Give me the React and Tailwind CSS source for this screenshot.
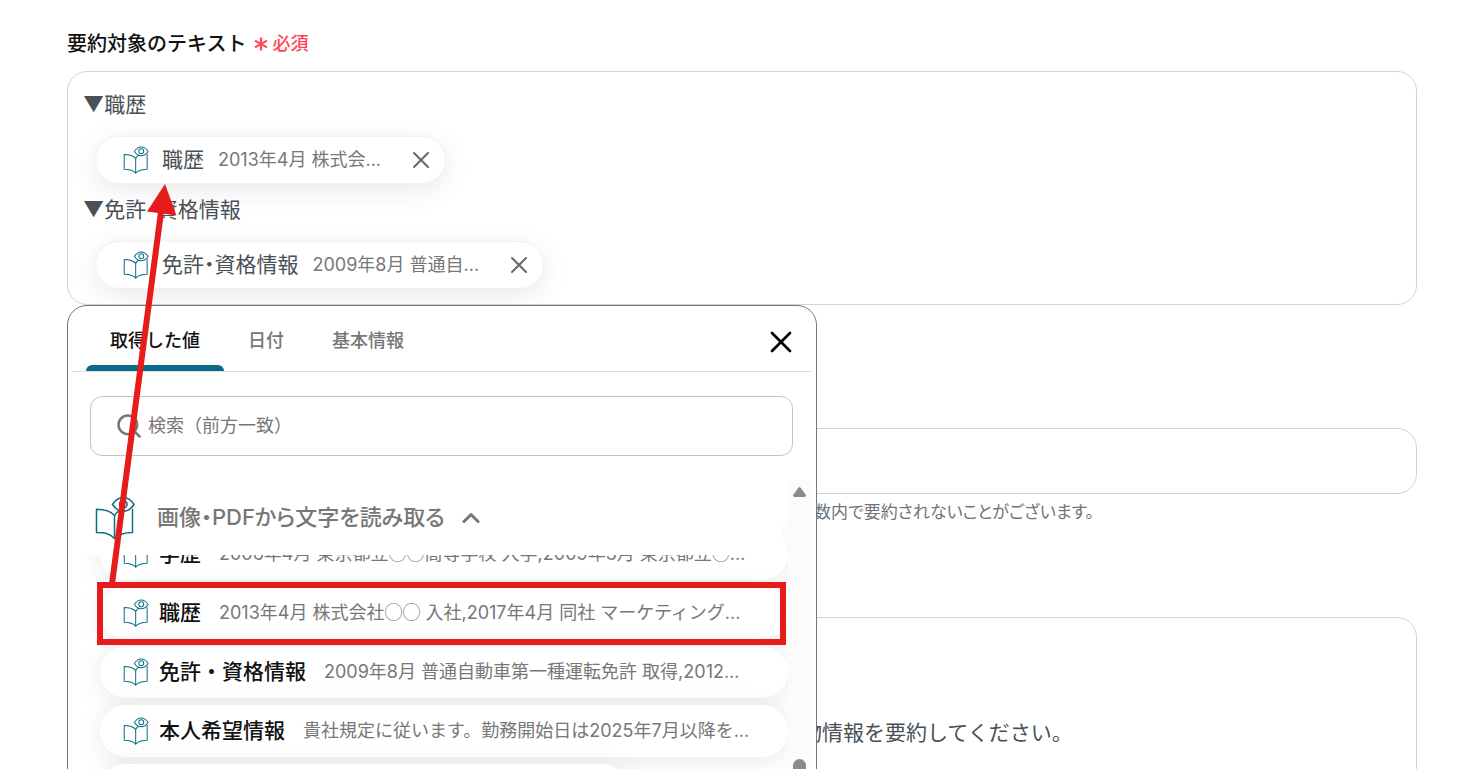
import React, { useState } from 'react';
import { ChevronUp, Search, X } from 'lucide-react';

const TABS = ['取得した値', '日付', '基本情報'];

const CHIPS = [
  { label: '職歴', value: '2013年4月 株式会...' },
  { label: '免許・資格情報', value: '2009年8月 普通自...' },
];

const ROWS = [
  { label: '学歴', value: '2006年4月 東京都立◯◯高等学校 入学,2009年3月 東京都立◯...' },
  { label: '職歴', value: '2013年4月 株式会社◯◯ 入社,2017年4月 同社 マーケティング...' },
  { label: '免許・資格情報', value: '2009年8月 普通自動車第一種運転免許 取得,2012...' },
  { label: '本人希望情報', value: '貴社規定に従います。勤務開始日は2025年7月以降を...' },
];

function BookIcon({ className, strokeWidth = 1.6 }) {
  return (
    <svg viewBox="0 0 40 44" fill="none" stroke="#0e6e87" strokeWidth={strokeWidth} strokeLinejoin="round" strokeLinecap="round" className={className} aria-hidden="true">
      <path d="M19.5 19.5C15.5 14.5 9 13.2 1.5 13.2V36.6C9 36.6 14.5 37 19.5 42.5C24.5 37.6 30 36.6 37.5 36.6V13.5" />
      <path d="M19.5 42.5V19.5C20.5 17.5 22 16 24 15" />
      <path d="M17.5 8.5C20.5 3.8 24 1.5 28.3 1.5S36 3.8 39 8.5C36 13 32.6 15.3 28.3 15.3S20.5 13 17.5 8.5Z" />
      <circle cx="28.3" cy="8.3" r="3.8" />
    </svg>
  );
}

function RequiredMark() {
  return (
    <svg width="14" height="14" viewBox="0 0 14 14" stroke="#ff4757" strokeWidth="2.2" aria-hidden="true">
      <path d="M7 0.5V13.5M1 3.6L13 10.4M13 3.6L1 10.4" />
    </svg>
  );
}

// Inter has its own oversized ◯, so the circles are set in the Japanese font
function Value({ text }) {
  return text.split(/(◯+)/).map((part, i) =>
    part.startsWith('◯') ? <span key={i} className="font-['Noto_Sans_CJK_JP',sans-serif] leading-none">{part}</span> : part
  );
}

function Chip({ label, value, onRemove }) {
  return (
    <div className="ml-3 mt-[14px] mb-[9px] flex h-12 w-fit items-center rounded-full border border-[#f1f1f1] bg-white pr-[10px] pl-[27px] shadow-[0_6px_28px_rgba(0,0,0,0.09)]">
      <BookIcon className="h-7 w-[26px]" />
      <span className="ml-[13px] text-[21px] text-[#495057]">{label}</span>
      <span className="ml-[14px] text-lg text-[#777]">{value}</span>
      <button type="button" aria-label={`${label}を削除`} onClick={onRemove} className="ml-[26px]">
        <X size={28} strokeWidth={1.8} className="text-[#6b6b6b]" />
      </button>
    </div>
  );
}

function ValuePicker() {
  const [tab, setTab] = useState(TABS[0]);
  const [query, setQuery] = useState('');

  return (
    <div className="absolute top-full left-0 z-10 flex h-[600px] w-[750px] max-w-full flex-col rounded-t-[20px] border border-[#777] bg-white pr-[5px] pl-1 text-[#777]">
      <div className="flex h-[66px] shrink-0 items-stretch border-b border-[#dedede] pr-3 pl-[14px]">
        {TABS.map((t) => (
          <button key={t} type="button" onClick={() => setTab(t)} className={t === tab ? 'relative px-6 text-lg font-medium text-[#111]' : 'px-6 text-lg font-medium'}>
            <span className="block pt-1 leading-7">{t}</span>
            {t === tab && <span className="absolute bottom-0 left-0 h-[6px] w-full rounded-t-md bg-[#0c6b84]" />}
          </button>
        ))}
        <button type="button" aria-label="閉じる" className="ml-auto pt-[6px]">
          <X size={36} strokeWidth={1.8} className="text-black" />
        </button>
      </div>

      <label className="mx-[18px] mt-6 flex h-[60px] shrink-0 items-center rounded-xl border border-[#c4c4c4] pl-6">
        <Search size={28} strokeWidth={2.2} aria-hidden="true" />
        <input value={query} onChange={(e) => setQuery(e.target.value)} aria-label="検索" placeholder="検索（前方一致）" className="ml-[5px] min-w-0 flex-1 text-lg outline-none placeholder:text-[#777]" />
      </label>

      <div className="mt-6 flex min-h-0 flex-1">
        <div className="min-w-0 flex-1 overflow-hidden">
          <button type="button" className="relative z-10 flex h-[75px] w-[710px] items-center bg-white pl-[23px] text-[22px] font-medium">
            <BookIcon className="h-11 w-10" strokeWidth={1.5} />
            <span className="ml-[22px] [font-feature-settings:'palt']">画像・PDFから文字を読み取る</span>
            <ChevronUp size={28} strokeWidth={2.6} className="ml-3" />
          </button>
          <ul className="-mt-[27px] ml-7 flex flex-col gap-[7px]">
            {ROWS.map((row) => (
              <li key={row.label}>
                <button type="button" className="flex h-[52px] w-full items-center rounded-full bg-white pl-[23px] whitespace-nowrap shadow-[0_4px_28px_rgba(0,0,0,0.09)]">
                  <BookIcon className="h-7 w-[26px] shrink-0" />
                  <span className="ml-[10px] text-[21px] font-medium text-[#111]">{row.label}</span>
                  <span className="ml-[18px] text-lg"><Value text={row.value} /></span>
                </button>
              </li>
            ))}
            <li className="h-[52px] w-[528px] rounded-full bg-white shadow-[0_4px_28px_rgba(0,0,0,0.09)]" />
          </ul>
        </div>
        <div className="flex w-[23px] flex-col items-center bg-[#fbfbfb] pt-[7px]">
          <svg width="15" height="11" viewBox="0 0 15 11" fill="#8b8b8b" aria-hidden="true">
            <path d="M6.2 0.8Q7.5 -0.6 8.8 0.8L14.3 8.5Q15 10.7 13 11H2Q0 10.7 0.7 8.5Z" />
          </svg>
          <div className="mt-[262px] h-40 w-[13px] rounded-full bg-[#8b8b8b]" />
        </div>
      </div>
    </div>
  );
}

// Red frame around the picked row and the arrow up to its chip
function Annotation() {
  return (
    <svg width="820" height="769" viewBox="0 0 820 769" className="pointer-events-none absolute top-0 left-0 z-20" aria-hidden="true">
      <rect x="100" y="585" width="683" height="57" fill="none" stroke="#e61c1c" strokeWidth="6" />
      <path d="M112 584L161 212" stroke="#e61c1c" strokeWidth="6" />
      <path d="M165 184L176.5 215.5L147 211.5Z" fill="#e61c1c" />
    </svg>
  );
}

export default function App() {
  const [chips, setChips] = useState(CHIPS);
  const [limit, setLimit] = useState('');
  const [prompt, setPrompt] = useState('物情報を要約してください。');

  return (
    <main lang="ja" className="relative h-screen overflow-hidden bg-white pt-7 pr-[65px] pl-[67px] font-[Inter,'Noto_Sans_CJK_JP',sans-serif]">
      <div className="mb-3 flex h-[31px] items-center">
        <h2 id="target-label" className="text-xl font-medium text-[#111]">要約対象のテキスト</h2>
        <span className="ml-2"><RequiredMark /></span>
        <span className="ml-1 text-lg font-medium text-[#ff4757]">必須</span>
      </div>

      <div className="relative">
        <div role="group" aria-labelledby="target-label" className="rounded-[20px] border border-[#ced4da] pt-4 pb-[6px] pl-[15px] [font-feature-settings:'palt']">
          {chips.map((chip) => (
            <div key={chip.label}>
              <p className="text-[21px] leading-[34px] text-[#495057]">▼{chip.label}</p>
              <Chip {...chip} onRemove={() => setChips(chips.filter((c) => c !== chip))} />
            </div>
          ))}
        </div>
        <ValuePicker />
      </div>

      <input value={limit} onChange={(e) => setLimit(e.target.value)} aria-label="文字数" className="mt-[123px] block h-[66px] w-full rounded-[20px] border border-[#ced4da] px-4 text-[21px]" />
      <p className="mt-1 pl-[747px] text-[17px] leading-7 whitespace-nowrap text-[#6c757d] [font-feature-settings:'palt']">数内で要約されないことがございます。</p>

      <textarea value={prompt} onChange={(e) => setPrompt(e.target.value)} aria-label="指示" className="mt-[91px] block h-[300px] w-full resize-none rounded-[20px] border border-[#ced4da] pt-[98px] pl-[733px] text-[21px] leading-[34px] text-[#495057]" />

      <Annotation />
    </main>
  );
}
